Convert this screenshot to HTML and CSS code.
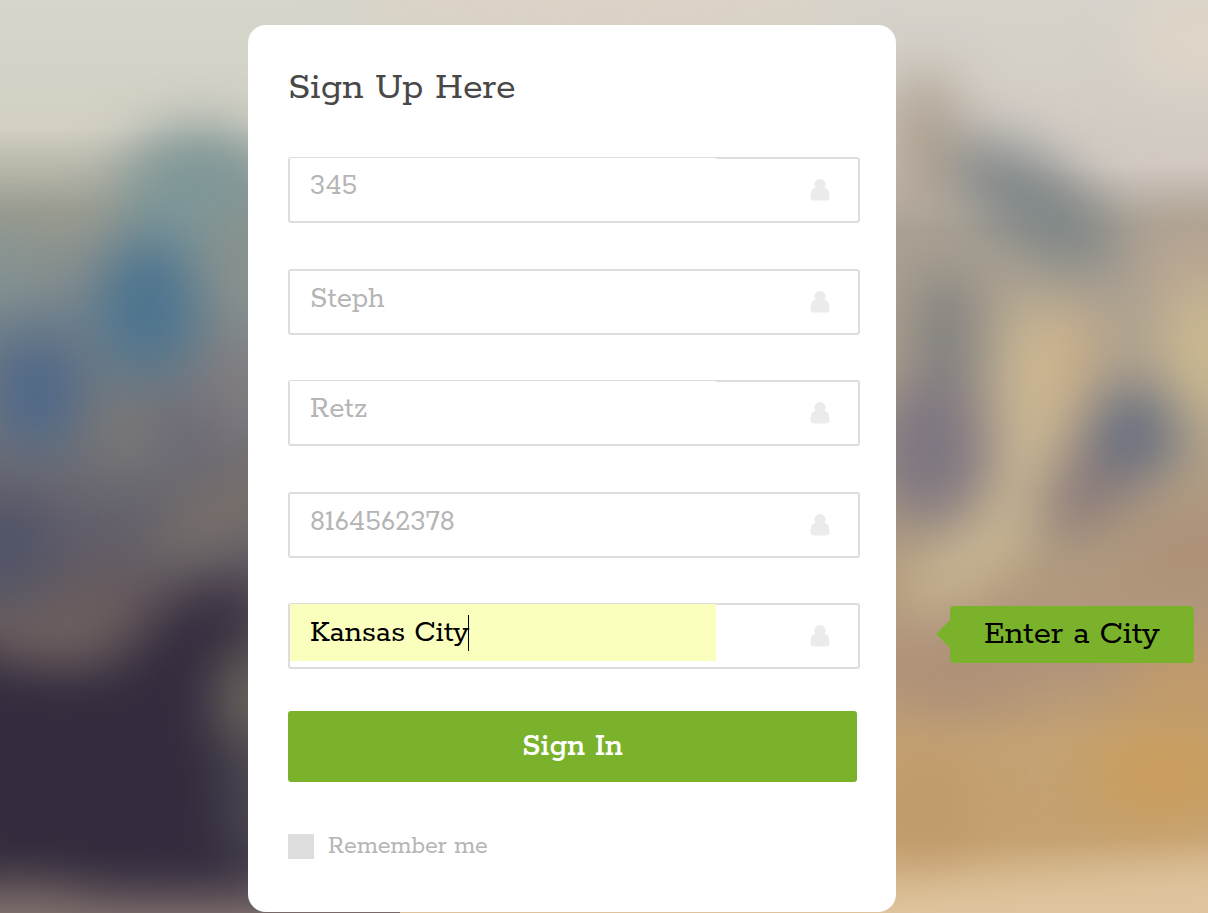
FILE: index.html
```html
<!DOCTYPE html>
<html lang="en">
<head>
<meta charset="utf-8">
<meta name="viewport" content="width=device-width, initial-scale=1">
<title>Sign Up Here</title>
<link rel="stylesheet" href="styles.css">
</head>
<body>
<svg class="backdrop" viewBox="0 0 1208 913" preserveAspectRatio="none" aria-hidden="true">
  <defs>
    <filter id="soft" x="-30%" y="-30%" width="160%" height="160%" color-interpolation-filters="sRGB"><feGaussianBlur stdDeviation="27"/></filter>
    <linearGradient id="left" x1="0" y1="0" x2="0" y2="1">
      <stop offset="0" stop-color="#d6d6cc"/><stop offset=".14" stop-color="#d3d0c3"/>
      <stop offset=".23" stop-color="#9a9c90"/><stop offset=".35" stop-color="#76838c"/>
      <stop offset=".46" stop-color="#747579"/><stop offset=".57" stop-color="#64616c"/>
      <stop offset=".68" stop-color="#62565c"/><stop offset=".76" stop-color="#393142"/>
      <stop offset=".93" stop-color="#393142"/><stop offset="1" stop-color="#7a6b6a"/>
    </linearGradient>
    <linearGradient id="right" x1="0" y1="0" x2="0" y2="1">
      <stop offset="0" stop-color="#d6d3cb"/><stop offset=".18" stop-color="#d2cac2"/>
      <stop offset=".25" stop-color="#aaa194"/><stop offset=".45" stop-color="#b3a48c"/>
      <stop offset=".62" stop-color="#b19a7e"/><stop offset=".73" stop-color="#b1957b"/>
      <stop offset=".81" stop-color="#c4a273"/><stop offset=".92" stop-color="#c5a170"/>
      <stop offset="1" stop-color="#dec49c"/>
    </linearGradient>
  </defs>
  <rect width="400" height="913" fill="url(#left)"/>
  <rect x="400" width="808" height="913" fill="url(#right)"/>
  <g filter="url(#soft)">
    <ellipse cx="600" cy="0" rx="250" ry="50" fill="#dbd2c6"/>
    <ellipse cx="200" cy="195" rx="82" ry="68" fill="#7f9798"/>
    <ellipse cx="260" cy="270" rx="60" ry="70" fill="#88918e"/>
    <ellipse cx="0" cy="270" rx="25" ry="35" fill="#849694"/>
    <ellipse cx="148" cy="305" rx="50" ry="70" fill="#4c748f"/>
    <ellipse cx="36" cy="392" rx="46" ry="60" fill="#4e6889"/>
    <ellipse cx="240" cy="385" rx="40" ry="50" fill="#827d80"/>
    <ellipse cx="130" cy="435" rx="40" ry="22" fill="#7e7c77"/>
    <ellipse cx="190" cy="440" rx="36" ry="34" fill="#6a6776"/>
    <ellipse cx="5" cy="550" rx="50" ry="55" fill="#505468"/>
    <ellipse cx="225" cy="510" rx="80" ry="34" fill="#78706a" transform="rotate(-30 225 510)"/>
    <ellipse cx="70" cy="625" rx="90" ry="34" fill="#6d605f"/>
    <path d="M-60 665 L80 695 L185 590 L260 580 L260 880 L-60 875Z" fill="#342c3e"/>
    <ellipse cx="252" cy="700" rx="34" ry="54" fill="#716d62"/>
    <ellipse cx="258" cy="800" rx="26" ry="70" fill="#535157"/>
    <ellipse cx="20" cy="910" rx="70" ry="16" fill="#89796f"/>
    <ellipse cx="925" cy="150" rx="40" ry="80" fill="#aea292"/>
    <ellipse cx="1035" cy="205" rx="96" ry="42" fill="#7e8587" transform="rotate(36 1035 205)"/>
    <ellipse cx="945" cy="345" rx="34" ry="80" fill="#80807f"/>
    <ellipse cx="930" cy="450" rx="60" ry="74" fill="#7e7681"/>
    <ellipse cx="1195" cy="260" rx="60" ry="45" fill="#b6a492"/>
    <ellipse cx="1205" cy="350" rx="40" ry="74" fill="#ccb991"/>
    <path d="M1005 315 L1085 305 L1070 430 L1035 540 L975 590 L900 620 L910 570 L990 505Z" fill="#cab895"/>
    <ellipse cx="1067" cy="365" rx="20" ry="60" fill="#d0b088" transform="rotate(8 1067 365)"/>
    <ellipse cx="1100" cy="475" rx="78" ry="38" fill="#8a7a79" transform="rotate(-45 1100 475)"/>
    <ellipse cx="1135" cy="432" rx="44" ry="46" fill="#656d80"/>
    <ellipse cx="1195" cy="550" rx="75" ry="42" fill="#ad9178" transform="rotate(-20 1195 550)"/>
    <ellipse cx="955" cy="680" rx="75" ry="30" fill="#ae9078"/>
    <ellipse cx="1190" cy="680" rx="70" ry="35" fill="#c39b68"/>
    <ellipse cx="925" cy="805" rx="48" ry="50" fill="#bf996a"/>
    <ellipse cx="1165" cy="775" rx="76" ry="46" fill="#ca9d5d"/>
    <path d="M880 905 L1260 855 L1260 960 L880 960Z" fill="#dec49e"/>
    <ellipse cx="1200" cy="40" rx="70" ry="50" fill="#dfd5c7"/>
  </g>
</svg>
<svg class="sprite" aria-hidden="true">
  <symbol id="user" viewBox="0 0 20 22"><path d="M10 0a5.500 5.500 0 0 1 4.600 8.700C18 9.300 19.500 12.500 19.500 18Q19.500 21.500 16 21.500H4Q.5 21.500 .5 18C.5 12.500 2 9.300 5.400 8.700A5.500 5.500 0 0 1 10 0Z"/></symbol>
</svg>
<main class="page">
  <form class="card">
    <h1 class="title">Sign Up Here</h1>
    <div class="fields">
      <div class="field field-raised">
        <input class="field-input" type="text" value="345" aria-label="ID number">
        <svg class="field-icon" aria-hidden="true"><use href="#user"/></svg>
      </div>
      <div class="field">
        <input class="field-input" type="text" value="Steph" aria-label="First name">
        <svg class="field-icon" aria-hidden="true"><use href="#user"/></svg>
      </div>
      <div class="field field-raised">
        <input class="field-input" type="text" value="Retz" aria-label="Last name">
        <svg class="field-icon" aria-hidden="true"><use href="#user"/></svg>
      </div>
      <div class="field">
        <input class="field-input" type="text" value="8164562378" aria-label="Phone">
        <svg class="field-icon" aria-hidden="true"><use href="#user"/></svg>
      </div>
      <div class="field field-raised field-active">
        <input class="field-input" type="text" value="Kansas City" aria-label="City" aria-describedby="city-tip">
        <svg class="field-icon" aria-hidden="true"><use href="#user"/></svg>
        <div class="tip" id="city-tip" role="tooltip">Enter a City</div>
      </div>
    </div>
    <button class="submit" type="submit">Sign In</button>
    <div class="remember">
      <input class="remember-box" type="checkbox" id="remember">
      <label for="remember">Remember me</label>
    </div>
  </form>
</main>
</body>
</html>
```
FILE: styles.css
```css
* { box-sizing: border-box; }

body {
  margin: 0;
  background: #b1a08a;
  font-family: Rokkitt, "DejaVu Serif", serif;
}

.backdrop {
  position: fixed;
  inset: 0;
  z-index: -1;
  width: 100%;
  height: 100%;
}

.sprite { display: none; }

.page {
  display: flex;
  justify-content: center;
  padding: 25px 64px 1px 0;
}

.card {
  width: 100%;
  max-width: 648px;
  padding: 43px 36px 53px 40px;
  border-radius: 18px;
  background: #fff;
}

.title {
  margin: 0 0 49px;
  color: #484848;
  font-size: 40px;
  font-weight: 400;
  line-height: 40px;
}

.fields {
  display: flex;
  flex-direction: column;
  justify-content: space-between;
  min-height: 512px;
}

.field {
  position: relative;
  display: flex;
  justify-content: space-between;
  align-items: flex-start;
  height: 66px;
  border: 2px solid #ddd;
  border-radius: 3px;
}

.field-input {
  width: 75%;
  height: 57px;
  padding: 0 20px;
  border: 0;
  outline: 0;
  background: #fff;
  color: #b5b5b5;
  font: inherit;
  font-size: 31px;
}

.field-raised .field-input { margin-top: -1px; }

.field-active .field-input {
  background: #faffbd;
  color: #000;
  font-size: 32px;
}

/* Text cursor of the active field */
.field-active::after {
  content: "";
  position: absolute;
  top: 10px;
  left: 178px;
  width: 1px;
  height: 36px;
  background: #000;
}

.field-icon {
  flex: none;
  width: 20px;
  height: 22px;
  margin: 20px 28px 0 0;
  fill: #ebebeb;
}

.tip {
  position: absolute;
  top: 1px;
  left: calc(100% + 92px);
  padding: 0 34px;
  border-radius: 4px;
  background: #7ab32b;
  color: #000;
  font-size: 35px;
  line-height: 57px;
  white-space: nowrap;
}

.tip::before {
  content: "";
  position: absolute;
  top: 14px;
  left: -14px;
  border: solid transparent;
  border-width: 14px 14px 14px 0;
  border-right-color: #7ab32b;
}

.submit {
  display: block;
  width: calc(100% - 3px);
  height: 71px;
  margin: 42px 0 52px;
  padding: 0;
  border: 0;
  border-radius: 3px;
  background: #7ab32b;
  color: #fff;
  font: inherit;
  font-size: 33px;
  font-weight: 500;
}

.remember {
  display: flex;
  align-items: center;
  gap: 14px;
  color: #b5b5b5;
  font-size: 26px;
  line-height: 25px;
}

.remember-box {
  appearance: none;
  width: 26px;
  height: 25px;
  margin: 0;
  background: #ddd;
}
```
